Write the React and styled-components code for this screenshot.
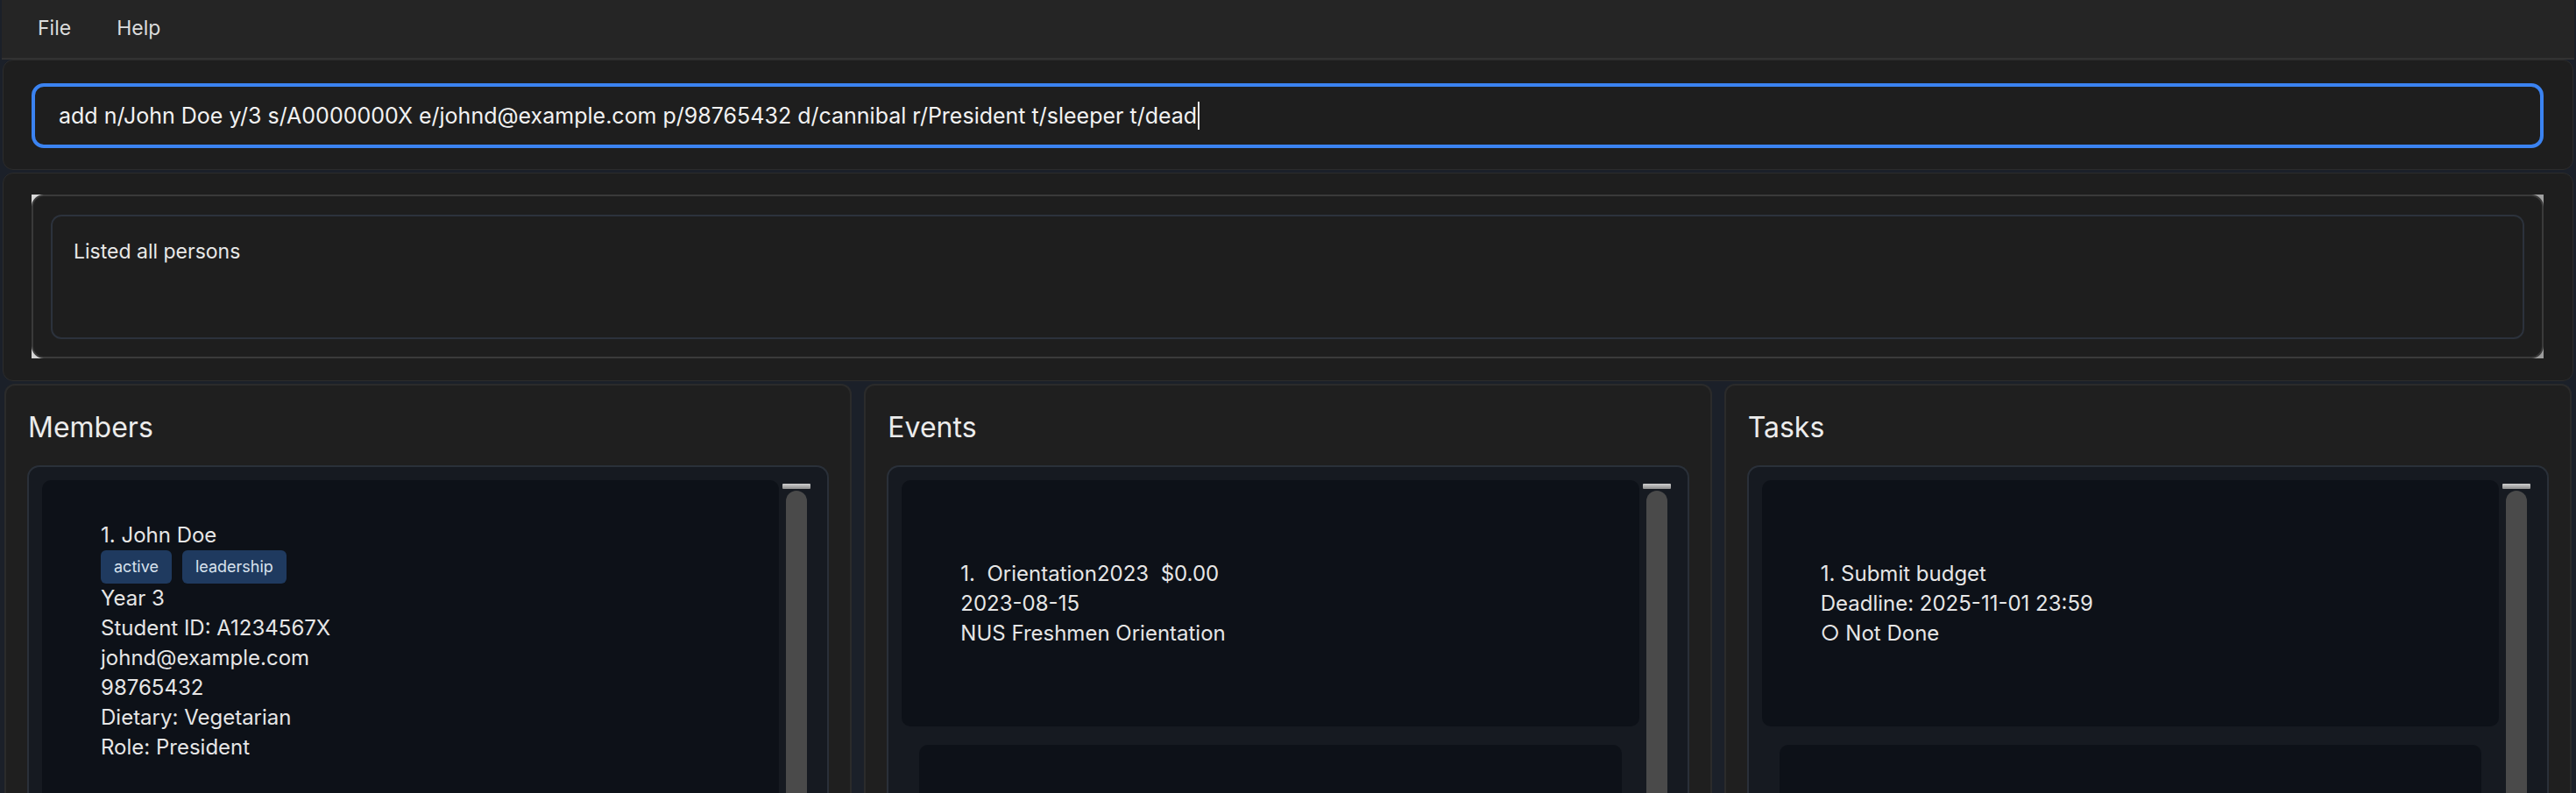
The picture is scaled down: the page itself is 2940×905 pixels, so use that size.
import React from "react";
import styled, { createGlobalStyle } from "styled-components";

const Global = createGlobalStyle`
  html, body { margin: 0; padding: 0; background: #1b2029; }
  * { box-sizing: border-box; }
  body { font-family: Inter, "Noto Sans", sans-serif; }
`;

const Window = styled.div`
  height: 100vh;
  overflow: hidden;
  display: flex;
  flex-direction: column;
  padding: 0 2px;
  background: #1b2029;
`;

const MenuBar = styled.div`
  height: 68px;
  flex-shrink: 0;
  display: flex;
  align-items: center;
  padding: 0 0 2px 15px;
  background: #252525;
  border-bottom: 2px solid #323232;
`;

const MenuItem = styled.span`
  padding: 0 26px;
  font-size: 23px;
  color: #dcdcdc;
`;

const CommandPanel = styled.div`
  flex-shrink: 0;
  margin: 0 1px;
  height: 126px;
  background: #1e1e1e;
  border: 1px solid #2c2c2c;
  border-radius: 12px;
  padding: 26px 33px 24px 32px;
`;

const CommandInput = styled.div`
  height: 74px;
  border: 4px solid #3b83f1;
  border-radius: 14px;
  background: #1e1e1e;
  padding: 0 27px;
  display: flex;
  align-items: center;
  font-size: 25px;
  color: #f2f2f2;
  white-space: pre;
`;

const Caret = styled.span`
  display: inline-block;
  width: 2px;
  height: 32px;
  margin-left: 1px;
  background: #e8e8e8;
`;

const ResultPanel = styled.div`
  flex-shrink: 0;
  margin: 3px 1px 0;
  height: 238px;
  background: #1e1e1e;
  border: 1px solid #2c2c2c;
  border-radius: 12px;
  padding: 24px 33px 25px 32px;
`;

const ResultFrame = styled.div`
  height: 100%;
  background: linear-gradient(135deg, #d8d8d8, #9c9c9c);
`;

const ResultArea = styled.div`
  height: 100%;
  background: #1e1e1e;
  border: 2px solid #3a3a3a;
  border-radius: 14px;
  padding: 21px 20px 20px;
`;

const ResultText = styled.div`
  height: 100%;
  border: 2px solid #2c323c;
  border-radius: 12px;
  padding: 23px 24px;
  font-size: 23px;
  line-height: 34px;
  color: #e8e8e8;
`;

const PanelRow = styled.div`
  flex: 1;
  min-height: 0;
  margin: 3px 1px 0;
  padding: 0 2px;
  display: grid;
  grid-template-columns: repeat(3, 1fr);
  gap: 14px;
`;

const Panel = styled.section`
  min-width: 0;
  display: flex;
  flex-direction: column;
  background: #1f1f1f;
  border: 2px solid #2b2b2b;
  border-bottom: none;
  border-radius: 12px 12px 0 0;
  padding: 0 24px;
  overflow: hidden;
`;

const PanelTitle = styled.h2`
  margin: 28px 0 23px 1px;
  font-size: 32px;
  line-height: 40px;
  font-weight: 400;
  color: #ececec;
`;

const ListBox = styled.div`
  flex: 1;
  min-height: 0;
  display: flex;
  background: #161a21;
  border: 2px solid #2a3039;
  border-bottom: none;
  border-radius: 14px 14px 0 0;
  padding: 15px 0 0 15px;
  overflow: hidden;
`;

const CardColumn = styled.div`
  flex: 1;
  min-width: 0;
  display: flex;
  flex-direction: column;
`;

const Card = styled.div`
  flex-shrink: 0;
  min-height: 281px;
  margin: ${(p) => (p.$inset ? "21px 20px 0" : "0")};
  padding: 46px 67px;
  display: flex;
  flex-direction: column;
  justify-content: center;
  background: #0d1118;
  border-radius: 10px;
  font-size: 24px;
  line-height: 34px;
  color: #e6e6e6;
  white-space: pre;
`;

const TagRow = styled.div`
  display: flex;
  gap: 12px;
`;

const Tag = styled.span`
  height: 38px;
  padding: 0 15px;
  display: flex;
  align-items: center;
  background: #1f3a5f;
  border-radius: 6px;
  font-size: 18px;
  color: #d8e2ee;
`;

const ScrollColumn = styled.div`
  width: 55px;
  flex-shrink: 0;
  display: flex;
  flex-direction: column;
  padding-left: 4px;
`;

const ScrollButton = styled.div`
  width: 32px;
  height: 6px;
  margin-top: 4px;
  border-radius: 1px;
  background: linear-gradient(#d0d0d0, #8c8c8c);
`;

const ScrollThumb = styled.div`
  flex: 1;
  width: 24px;
  margin: 2px 0 0 4px;
  background: #4a4a4a;
  border-radius: 12px 12px 0 0;
`;

const Scrollbar = () => (
  <ScrollColumn>
    <ScrollButton />
    <ScrollThumb />
  </ScrollColumn>
);

const ListPanel = ({ title, children }) => (
  <Panel>
    <PanelTitle>{title}</PanelTitle>
    <ListBox>
      <CardColumn>{children}</CardColumn>
      <Scrollbar />
    </ListBox>
  </Panel>
);

export default function App() {
  return (
    <>
      <Global />
      <Window>
        <MenuBar>
          <MenuItem>File</MenuItem>
          <MenuItem>Help</MenuItem>
        </MenuBar>
        <CommandPanel>
          <CommandInput>
            add n/John Doe y/3 s/A0000000X e/johnd@example.com p/98765432 d/cannibal r/President t/sleeper t/dead
            <Caret />
          </CommandInput>
        </CommandPanel>
        <ResultPanel>
          <ResultFrame>
            <ResultArea>
              <ResultText>Listed all persons</ResultText>
            </ResultArea>
          </ResultFrame>
        </ResultPanel>
        <PanelRow>
          <ListPanel title="Members">
            <Card>
              <div>1. John Doe</div>
              <TagRow>
                <Tag>active</Tag>
                <Tag>leadership</Tag>
              </TagRow>
              <div>Year 3</div>
              <div>Student ID: A1234567X</div>
              <div>johnd@example.com</div>
              <div>98765432</div>
              <div>Dietary: Vegetarian</div>
              <div>Role: President</div>
            </Card>
          </ListPanel>
          <ListPanel title="Events">
            <Card>
              <div>1.  Orientation2023  $0.00</div>
              <div>2023-08-15</div>
              <div>NUS Freshmen Orientation</div>
            </Card>
            <Card $inset />
          </ListPanel>
          <ListPanel title="Tasks">
            <Card>
              <div>1. Submit budget</div>
              <div>Deadline: 2025-11-01 23:59</div>
              <div>○ Not Done</div>
            </Card>
            <Card $inset />
          </ListPanel>
        </PanelRow>
      </Window>
    </>
  );
}
